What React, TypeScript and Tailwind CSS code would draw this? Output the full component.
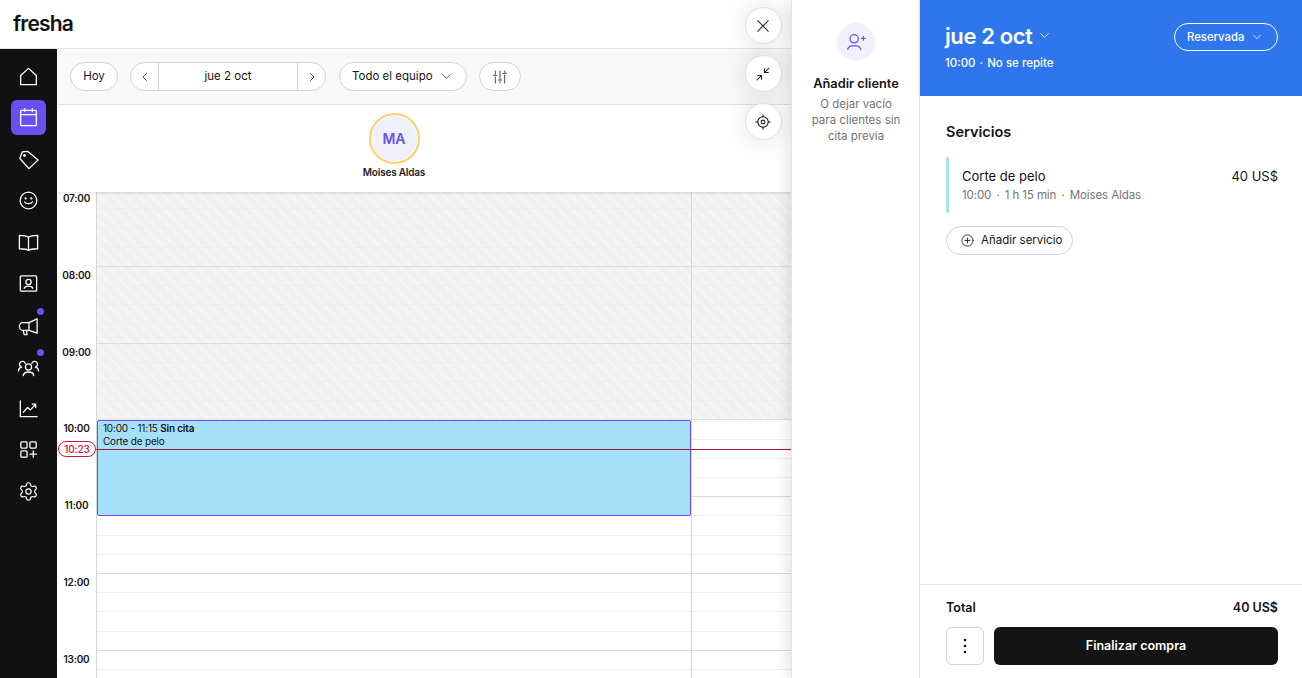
import React from "react";
import { Settings } from "lucide-react";

const font = { fontFamily: "Inter, 'Liberation Sans', sans-serif" };

function Ico({ size = 24, children, sw = 1.5, className = "" }: { size?: number; children: React.ReactNode; sw?: number; className?: string }) {
  return (
    <svg width={size} height={size} viewBox="0 0 24 24" fill="none" stroke="currentColor" strokeWidth={sw} strokeLinecap="round" strokeLinejoin="round" className={className}>
      {children}
    </svg>
  );
}

const nav: { active?: boolean; dot?: boolean; icon: React.ReactNode }[] = [
  { icon: <path d="M3.800 20.500V11L12 3.500l8.200 7.500v9.500z" /> },
  { active: true, icon: <><rect x="3.800" y="4.500" width="16.400" height="16" rx="1" /><path d="M3.800 9h16.400M8 2.800v3M16 2.800v3" /></> },
  { icon: <><path d="M5.500 4 11 3.500l11 9-9.500 9L3 11z" /><circle cx="7.800" cy="7.800" r=".8" /></> },
  { icon: <><circle cx="12" cy="12" r="8.700" /><path d="M8 13.500c1 2.300 7 2.300 8 0" /><circle cx="9" cy="9.800" r=".5" /><circle cx="15" cy="9.800" r=".5" /></> },
  { icon: <><path d="M12 6.500C10 4.800 7 4.500 2.500 4.500v14c4.500 0 7.500.2 9.500 1.700 2-1.500 5-1.700 9.500-1.700v-14c-4.500 0-7.500.3-9.500 2z" /><path d="M12 6.500v13.700" /></> },
  { icon: <><rect x="3.500" y="4" width="17" height="16" rx="1" /><circle cx="12" cy="10.500" r="2.700" /><path d="M7.500 17c.8-3 8.200-3 9 0" /></> },
  { dot: true, icon: <path d="M21 5l-8.500 4H6a3.500 4 0 0 0 0 8h6.500L21 20zM12.500 9v8M6.500 17l1 4.500h3L10 17" /> },
  { dot: true, icon: <><circle cx="12" cy="12.500" r="3.200" /><path d="M6.500 21.500c.8-5 10.200-5 11 0" /><path d="M8.500 8.800a3 3 0 1 0-4.200 3.500M15.500 8.800a3 3 0 1 1 4.200 3.500M1.500 16.500c.3-2.200 1.500-3.500 3.300-3.800M22.500 16.500c-.3-2.200-1.500-3.500-3.300-3.800" /></> },
  { icon: <><path d="M3.500 4v16.500h17.500" /><path d="m6.500 16 4.500-5 3 2.500 5.500-6M16 7.500h3.500V11" /></> },
  { icon: <><rect x="4" y="4" width="6.500" height="6.500" rx="1" /><rect x="13.500" y="4" width="6.500" height="6.500" rx="1" /><rect x="4" y="13.500" width="6.500" height="6.500" rx="1" /><path d="M17 13.500V20M13.500 16.800H20.500" /></> },
];

function QuarterRows({ hatched }: { hatched?: boolean }) {
  return (
    <div className={`h-[76.8px] border-b flex flex-col ${hatched ? "border-[#e0e0e0]" : "border-[#d9d9d9]"}`}>
      {[0, 1, 2, 3].map((i) => (
        <div key={i} className={`flex-1 ${i < 3 ? (hatched ? "border-b border-[#eeeeee]" : "border-b border-[#efefef]") : ""}`} />
      ))}
    </div>
  );
}

const hours = ["07:00", "08:00", "09:00", "10:00", "11:00", "12:00", "13:00"];
const hatch =
  "bg-[#f2f2f2] bg-[repeating-linear-gradient(45deg,#f1f1f1_0,#f1f1f1_6px,#f5f5f5_6px,#f5f5f5_9px)]";

function Column({ className = "", children }: { className?: string; children?: React.ReactNode }) {
  return (
    <div className={`relative ${className}`}>
      <div className={`absolute left-0 right-0 top-0 h-[230.4px] ${hatch}`} />
      <div className="relative">
        {hours.map((h, i) => (
          <QuarterRows key={h} hatched={i < 3} />
        ))}
      </div>
      {children}
    </div>
  );
}

export default function App() {
  return (
    <div style={font} className="relative flex h-[678px] w-[1302px] overflow-hidden bg-white text-[#141414]">
      <div className="relative flex w-[791px] flex-col">
        <div className="flex h-[49px] shrink-0 items-center border-b border-[#e5e5e5] pl-[13px]">
          <span className="-mt-[2px] text-[21px] font-semibold leading-none tracking-[-0.8px] text-[#101010]">fresha</span>
        </div>
        <div className="flex min-h-0 flex-1">
          <nav className="flex w-[57px] shrink-0 flex-col items-center bg-[#111111] pt-[9.500px] text-white">
            {nav.map((n, i) => (
              <div key={i} className={`relative mb-[6.500px] flex h-[35px] w-[35px] items-center justify-center rounded-[6px] pr-[1px] ${n.active ? "bg-[#6950f3]" : ""}`}>
                <Ico size={23} sw={1.35}>{n.icon}</Ico>
                {n.dot && <span className="absolute right-[2px] top-[0px] h-[7px] w-[7px] rounded-full bg-[#6950f3]" />}
              </div>
            ))}
            <div className="flex h-[35px] w-[35px] items-center justify-center pr-[1px]">
              <Settings size={21} strokeWidth={1.35} />
            </div>
          </nav>
          <div className="flex min-w-0 flex-1 flex-col">
            <div className="flex h-[56px] shrink-0 items-center gap-[12px] border-b border-[#e5e5e5] bg-[#f8f8f8] pl-[13px] text-[11.500px]">
              <div className="flex h-[29px] w-[48px] items-center justify-center rounded-full border border-[#d3d3d3] bg-white pt-[1px]">Hoy</div>
              <div className="mr-[1px] flex h-[29px] w-[196px] items-center rounded-full border border-[#d3d3d3] bg-white">
                <div className="flex h-full w-[28px] items-center justify-center border-r border-[#d3d3d3]">
                  <Ico size={12}><path d="m15 5-7 7 7 7" /></Ico>
                </div>
                <div className="flex-1 pt-[1px] text-center">jue 2 oct</div>
                <div className="flex h-full w-[28px] items-center justify-center border-l border-[#d3d3d3]">
                  <Ico size={12}><path d="m9 5 7 7-7 7" /></Ico>
                </div>
              </div>
              <div className="flex h-[29px] w-[128px] items-center justify-between rounded-full border border-[#d3d3d3] bg-white pl-[12px] pr-[14px]">
                <span className="pt-[1px]">Todo el equipo</span>
                <Ico size={11}><path d="m4 8 8 8 8-8" /></Ico>
              </div>
              <div className="flex h-[29px] w-[42px] items-center justify-center rounded-full border border-[#d3d3d3] bg-white">
                <Ico size={16} sw={1.15}><path d="M5 3v5M5 12v9M12 3v12M12 19v2M19 3v2M19 9v12M2.500 9.500h5M9.500 16.500h5M16.500 6.500h5" /></Ico>
              </div>
            </div>
            <div className="relative z-10 flex h-[87px] shrink-0 bg-white pt-[8px] shadow-[0_1px_3px_rgba(0,0,0,0.14)]">
              <div className="w-[39px] shrink-0" />
              <div className="flex w-[596px] shrink-0 flex-col items-center">
                <div className="flex h-[51px] w-[51px] items-center justify-center rounded-full border-2 border-[#fdd06b] bg-white">
                  <div className="flex h-[45px] w-[45px] items-center justify-center rounded-full bg-[#f0f0ff] text-[14px] font-semibold text-[#6950f3]">MA</div>
                </div>
                <div className="mt-[1px] text-[10px] font-semibold tracking-[-0.2px] text-[#222]">Moises Aldas</div>
              </div>
            </div>
            <div className="relative min-h-0 flex-1 overflow-hidden">
              <div className="-mt-[2px] flex">
                <div className="w-[39px] shrink-0 pt-[1px]">
                  {hours.map((h) => (
                    <div key={h} className="h-[76.8px] text-center text-[10px] font-semibold leading-[14px] tracking-[-0.2px]">{h}</div>
                  ))}
                </div>
                <Column className="w-[596px] shrink-0 border-x border-[#d6d6d6]">
                  <div className="absolute left-0 top-[230.4px] h-[96px] w-[594px] rounded-[2px] border border-[#6950f3] bg-[#a5dff8] px-[5px] pt-[1px] text-[10px] leading-[13px] tracking-[-0.2px] text-[#101010]">
                    <div>10:00 - 11:15 <b className="font-semibold">Sin cita</b></div>
                    <div>Corte de pelo</div>
                  </div>
                </Column>
                <Column className="flex-1" />
              </div>
              <div className="absolute left-[39px] right-0 top-[256.800px] h-px bg-[#a5173c]" />
              <div className="absolute left-[1px] top-[249px] flex h-[16px] w-[38px] items-center justify-center rounded-full border border-[#d6123f] bg-white text-[10px] font-medium tracking-[-0.1px] text-[#d6123f]">10:23</div>
            </div>
          </div>
        </div>
        <div className="absolute right-[9.500px] top-[7px] z-20 flex flex-col gap-[11px]">
          {[
            <path key="a" d="m5 5 14 14M19 5 5 19" />,
            <path key="b" d="M20 4l-6 6M14 5v5h5M4 20l6-6M10 19v-5H5" />,
            <g key="c"><circle cx="12" cy="12" r="7" /><circle cx="12" cy="12" r="2.500" /><path d="M12 2.500v2.500M12 19v2.500M2.500 12H5M19 12h2.500" /></g>,
          ].map((p, i) => (
            <div key={i} className="flex h-[37px] w-[37px] items-center justify-center rounded-full border border-[#e0e0e0] bg-white shadow-[0_0_24px_rgba(0,0,0,0.12)]">
              <Ico size={18} sw={1.4}>{p}</Ico>
            </div>
          ))}
        </div>
      </div>

      <aside className="relative z-30 flex w-[129px] shrink-0 flex-col items-center border-x border-[#e5e5e5] bg-white pl-[1px] pt-[23px] shadow-[0_0_16px_rgba(0,0,0,0.16)]">
        <div className="flex h-[38px] w-[38px] items-center justify-center rounded-full bg-[#f0f0ff] text-[#6950f3]">
          <Ico size={22} sw={1.4}><circle cx="10" cy="8.500" r="4.500" /><path d="M3 20c.8-5.500 13-5.500 14 0M18 8h4M20 6v4" /></Ico>
        </div>
        <div className="mt-[14px] text-[12.800px] font-semibold leading-[17px]">Añadir cliente</div>
        <div className="mt-[4px] w-[90px] text-center text-[11.500px] leading-[16px] text-[#757575]">O dejar vacío para clientes sin cita previa</div>
      </aside>

      <section className="relative z-30 flex min-w-0 flex-1 flex-col bg-white">
        <header className="flex h-[96px] shrink-0 items-start justify-between bg-[#2f76ed] pl-[25px] pr-[24px] pt-[22px] text-white">
          <div>
            <div className="flex h-[27px] items-center gap-[7px] text-[22px] font-semibold leading-none tracking-[-0.4px]">
              jue 2 oct
              <Ico size={11} sw={2}><path d="m4 8 8 8 8-8" /></Ico>
            </div>
            <div className="mt-[6px] text-[11.500px] font-medium leading-[16px]">10:00 <span className="mx-[1px]">·</span> No se repite</div>
          </div>
          <div className="mt-[1px] flex h-[28px] w-[104px] items-center justify-between rounded-full border border-white pl-[12px] pr-[15px] text-[11.300px] font-medium">
            <span className="pt-[1px]">Reservada</span>
            <Ico size={10} sw={2}><path d="m4 8 8 8 8-8" /></Ico>
          </div>
        </header>
        <div className="flex-1 pl-[26px] pr-[24px] pt-[27px]">
          <h2 className="text-[14.500px] font-semibold leading-[18px]">Servicios</h2>
          <div className="mt-[16px] flex h-[56px] justify-between rounded-[2px] border-l-[3px] border-[#a5dff8] pl-[13px] pt-[10px]">
            <div>
              <div className="text-[13px] leading-[18px]">Corte de pelo</div>
              <div className="mt-[3px] text-[11.500px] leading-[15px] tracking-[-0.1px] text-[#757575]">10:00 <span className="mx-[2px]">·</span> 1 h 15 min <span className="mx-[2px]">·</span> Moises Aldas</div>
            </div>
            <div className="text-[13px] leading-[18px]">40 US$</div>
          </div>
          <div className="mt-[13px] flex h-[29px] w-[127px] items-center gap-[6px] rounded-full border border-[#d3d3d3] pl-[13px] text-[11.500px]">
            <Ico size={15} sw={1.3}><circle cx="12" cy="12" r="9" /><path d="M12 8v8M8 12h8" /></Ico>
            Añadir servicio
          </div>
        </div>
        <footer className="h-[94px] shrink-0 border-t border-[#e5e5e5] pl-[26px] pr-[24px] pt-[15px]">
          <div className="flex justify-between text-[12.500px] font-semibold leading-[16px]">
            <span>Total</span>
            <span>40 US$</span>
          </div>
          <div className="mt-[11px] flex gap-[10px]">
            <div className="flex h-[38px] w-[38px] items-center justify-center rounded-[6px] border border-[#d3d3d3]">
              <svg width="4" height="16" viewBox="0 0 4 16" fill="#141414"><circle cx="2" cy="2" r="1.300" /><circle cx="2" cy="8" r="1.300" /><circle cx="2" cy="14" r="1.300" /></svg>
            </div>
            <div className="flex h-[38px] flex-1 items-center justify-center rounded-[6px] bg-[#141414] text-[12.500px] font-semibold text-white">Finalizar compra</div>
          </div>
        </footer>
      </section>
    </div>
  );
}
